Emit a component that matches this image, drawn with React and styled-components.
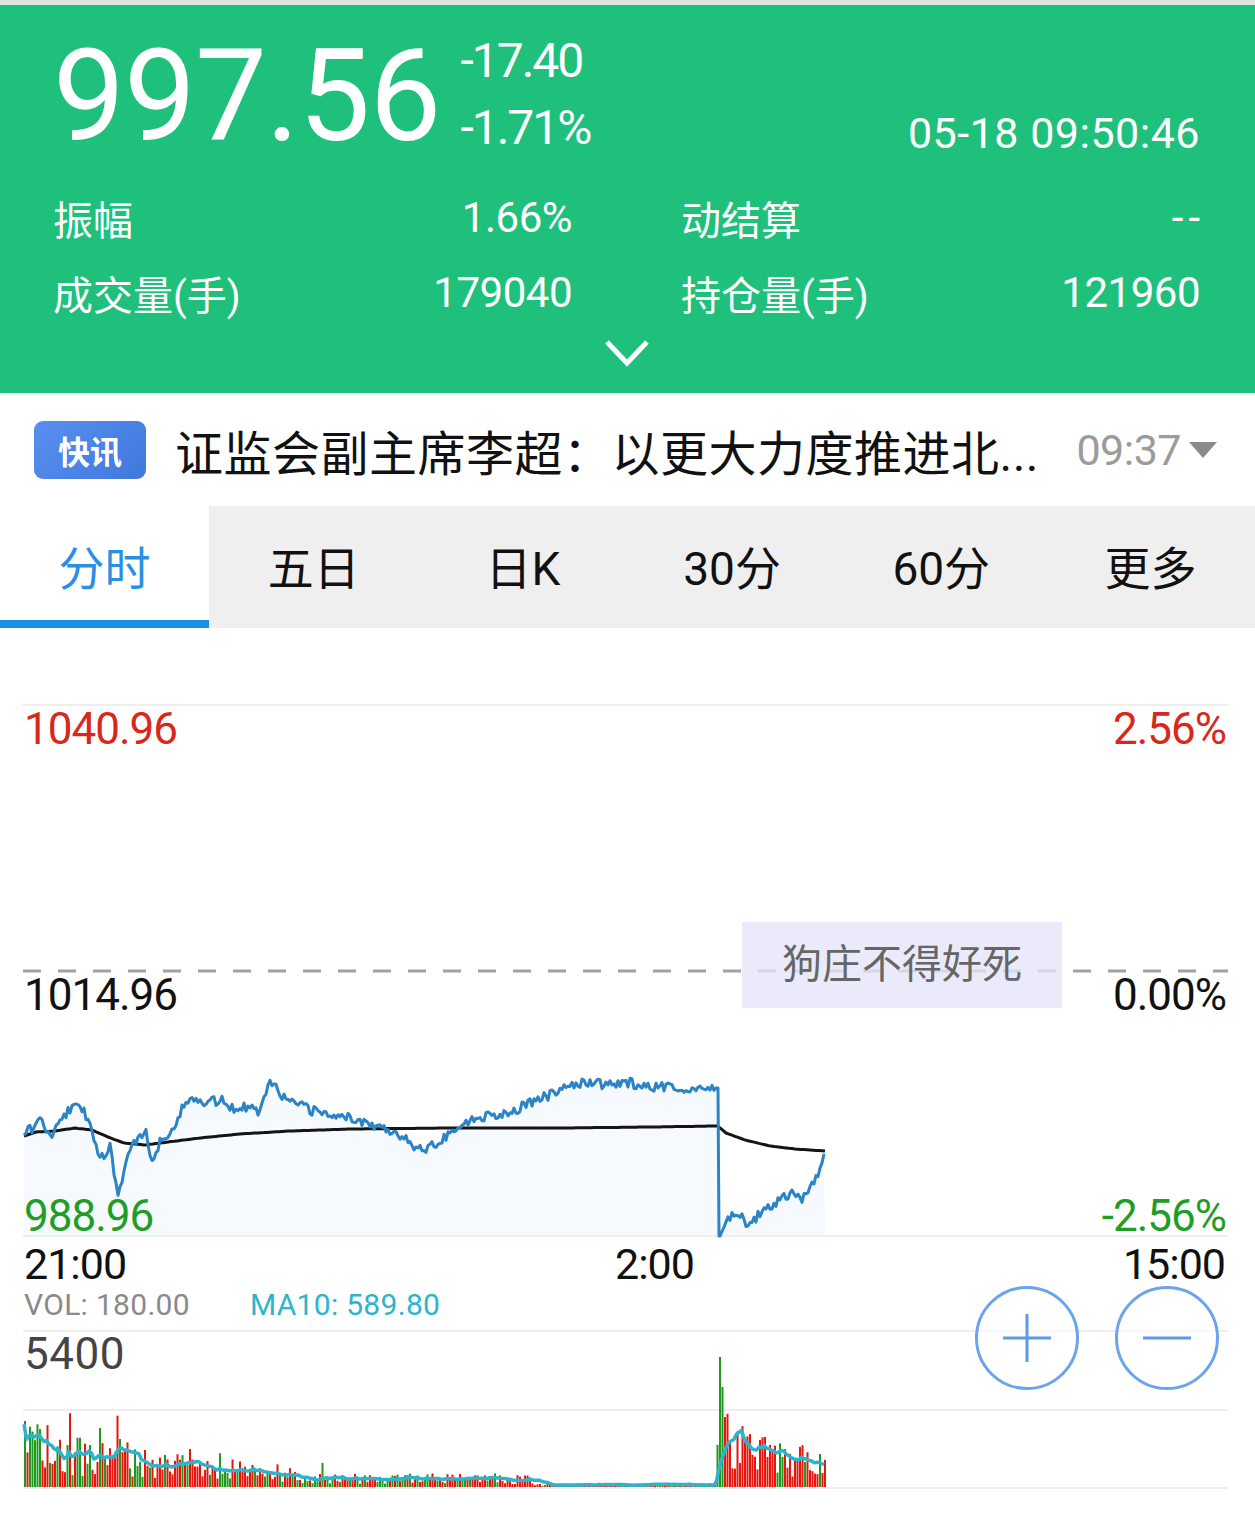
import React from "react";
import styled, { createGlobalStyle } from "styled-components";

const GREEN = "#1fc07c";
const RED = "#d9271c";
const DOWN = "#1f9e25";
const BLUE_LINE = "#2a84c6";

const GlobalStyle = createGlobalStyle`
  body {
    margin: 0;
    background: #fff;
    font-family: Roboto, "Noto Sans CJK SC", sans-serif;
  }
`;

const Page = styled.div`
  width: 1255px;
  height: 1518px;
  overflow: hidden;
  background: #fff;
`;

const TopStrip = styled.div`
  height: 5px;
  background: #dfe3e1;
`;

const Header = styled.header`
  height: 388px;
  box-sizing: border-box;
  padding: 0 55px 0 53px;
  background: ${GREEN};
  color: #fff;
  display: flex;
  flex-direction: column;
`;

const PriceRow = styled.div`
  display: flex;
  align-items: flex-start;
  margin-top: 22px;
  height: 136px;
`;

const Price = styled.div`
  margin-top: 5px;
  font-size: 128px;
  line-height: 128px;
  letter-spacing: -1px;
`;

const ChangeCol = styled.div`
  margin-left: 20px;
  font-size: 48px;
  line-height: 67px;
  letter-spacing: -2px;
`;

const DateTime = styled.div`
  margin-left: auto;
  margin-top: 85px;
  font-size: 43px;
  line-height: 43px;
  letter-spacing: 0.5px;
`;

const StatsGrid = styled.div`
  margin-top: 17px;
  display: grid;
  grid-template-columns: 1fr 1fr;
  column-gap: 109px;
`;

const StatCell = styled.div`
  display: flex;
  justify-content: space-between;
  align-items: center;
  height: 75px;
  font-size: 40px;
`;

const StatValue = styled.span`
  font-size: 42px;
  letter-spacing: ${(p) => (p.$spaced ? "5px" : "-0.5px")};
  margin-right: ${(p) => (p.$spaced ? "-5px" : "0")};
`;

const Chevron = styled.div`
  display: flex;
  justify-content: center;
  margin-top: 8px;
`;

const NewsBar = styled.div`
  height: 113px;
  display: flex;
  align-items: center;
  padding: 0 38px 0 34px;
  box-sizing: border-box;
`;

const Badge = styled.div`
  width: 112px;
  height: 58px;
  border-radius: 9px;
  background: linear-gradient(135deg, #5a8ff0, #3f78dc);
  color: #fff;
  font-size: 32px;
  font-weight: 700;
  display: flex;
  align-items: center;
  justify-content: center;
  flex-shrink: 0;
`;

const Headline = styled.div`
  margin-left: 29px;
  font-size: 48px;
  letter-spacing: 0.5px;
  color: #111;
  white-space: nowrap;
  flex: 1;
`;

const NewsTime = styled.div`
  font-size: 43px;
  color: #9b9b9b;
  letter-spacing: -0.5px;
  display: flex;
  align-items: center;
`;

const Caret = styled.span`
  margin-left: 8px;
  width: 0;
  height: 0;
  border-left: 14px solid transparent;
  border-right: 14px solid transparent;
  border-top: 16px solid #8a8a8a;
`;

const TabBar = styled.div`
  height: 122px;
  display: grid;
  grid-template-columns: repeat(6, 1fr);
  background: #efefef;
`;

const Tab = styled.div`
  display: flex;
  align-items: center;
  justify-content: center;
  box-sizing: border-box;
  font-size: 46px;
  color: ${(p) => (p.$active ? "#2a8fe2" : "#111")};
  background: ${(p) => (p.$active ? "#fff" : "transparent")};
  border-bottom: 8px solid ${(p) => (p.$active ? "#1a8ee6" : "transparent")};
  padding-top: 4px;
`;

const PriceChart = styled.div`
  position: relative;
  height: 612px;
`;

const ChartSvg = styled.svg`
  position: absolute;
  left: 0;
  top: 0;
  display: block;
`;

const AxisLabel = styled.div`
  position: absolute;
  top: ${(p) => p.$top}px;
  ${(p) => (p.$right ? "right: 29px;" : "left: 24px;")}
  font-size: 44px;
  line-height: 44px;
  letter-spacing: -1px;
  color: ${(p) => p.$color};
`;

const Remark = styled.div`
  position: absolute;
  left: 742px;
  top: 294px;
  width: 320px;
  height: 86px;
  background: rgba(228, 228, 250, 0.78);
  color: #666;
  font-size: 40px;
  display: flex;
  align-items: center;
  justify-content: center;
  padding-bottom: 8px;
  box-sizing: border-box;
`;

const TimeAxis = styled.div`
  display: grid;
  grid-template-columns: 591px 132px 1fr;
  padding: 3px 30px 0 24px;
  height: 45px;
  font-size: 43px;
  line-height: 43px;
  letter-spacing: -1px;
  color: #111;
`;

const TimeRight = styled.span`
  text-align: right;
`;

const VolumeChart = styled.div`
  position: relative;
  height: 230px;
`;

const VolLegend = styled.div`
  position: absolute;
  left: 24px;
  top: 4px;
  display: flex;
  gap: 60px;
  font-size: 30px;
  line-height: 26px;
  letter-spacing: 0.3px;
`;

const LegendItem = styled.span`
  color: ${(p) => p.$color};
`;

const VolMax = styled.div`
  position: absolute;
  left: 24px;
  top: 44px;
  font-size: 44px;
  line-height: 44px;
  color: #444;
  letter-spacing: 0.5px;
`;

const ZoomGroup = styled.div`
  position: absolute;
  left: 975px;
  top: -2px;
  display: flex;
  gap: 36px;
`;

const ZoomButton = styled.div`
  width: 104px;
  height: 104px;
  border-radius: 50%;
  border: 3px solid #6aa4ec;
  box-sizing: border-box;
  display: flex;
  align-items: center;
  justify-content: center;
  background: rgba(255, 255, 255, 0.6);
`;

function rng(seed) {
  return function () {
    seed |= 0;
    seed = (seed + 0x6d2b79f5) | 0;
    let t = Math.imul(seed ^ (seed >>> 15), 1 | seed);
    t = (t + Math.imul(t ^ (t >>> 7), 61 | t)) ^ t;
    return ((t ^ (t >>> 14)) >>> 0) / 4294967296;
  };
}

function interp(points, x) {
  for (let i = 0; i < points.length - 1; i++) {
    const [x0, y0] = points[i];
    const [x1, y1] = points[i + 1];
    if (x >= x0 && x <= x1) {
      const t = x1 === x0 ? 0 : (x - x0) / (x1 - x0);
      return y0 + (y1 - y0) * t;
    }
  }
  return points[points.length - 1][1];
}

const priceKeys = [
  [24, 1135], [32, 1128], [40, 1118], [50, 1138], [58, 1125], [68, 1110], [80, 1106],
  [90, 1122], [98, 1150], [104, 1162], [110, 1148], [118, 1196], [126, 1160],
  [136, 1140], [146, 1134], [152, 1160], [160, 1142], [172, 1128], [182, 1110],
  [192, 1095], [205, 1104], [220, 1100], [235, 1108], [248, 1106], [258, 1112],
  [270, 1078], [282, 1096], [295, 1104], [310, 1110], [330, 1114], [350, 1118],
  [372, 1124], [392, 1130], [405, 1138], [418, 1150], [432, 1146], [448, 1134],
  [462, 1124], [480, 1117], [500, 1114], [520, 1108], [536, 1100], [552, 1094],
  [570, 1086], [590, 1082], [610, 1085], [630, 1083], [650, 1088], [672, 1086],
  [690, 1090], [705, 1088], [718, 1088], [720, 1236], [728, 1218], [738, 1214],
  [748, 1224], [760, 1214], [772, 1204], [784, 1198], [794, 1194], [802, 1198],
  [812, 1186], [818, 1176], [825, 1150],
];

const avgKeys = [
  [24, 1136], [36, 1132], [55, 1131], [75, 1128], [92, 1130], [108, 1137],
  [124, 1143], [145, 1145], [168, 1142], [200, 1138], [240, 1134], [290, 1131],
  [350, 1129], [450, 1128], [560, 1128], [650, 1127], [718, 1126], [726, 1133],
  [745, 1140], [770, 1146], [795, 1149], [825, 1151],
];

function buildPrice() {
  const r = rng(7);
  const pts = [];
  for (let x = 24; x <= 825; x += 2) {
    let y = interp(priceKeys, x);
    const near = x >= 716 && x <= 722;
    if (!near && x > 26 && x < 823) y += (r() - 0.5) * 10;
    pts.push([x, y]);
    if (x === 718) pts.push([719, 1236]);
  }
  return pts;
}

function buildAvg() {
  const pts = [];
  for (let x = 24; x <= 825; x += 3) pts.push([x, interp(avgKeys, x)]);
  pts.push([825, 1151]);
  return pts;
}

function volEnvelope(x) {
  if (x < 50) return 48;
  if (x < 130) return 36;
  if (x < 300) return 28 - (x - 130) * 0.08;
  if (x < 530) return 10;
  if (x < 716) return 3;
  return 26 + 40 * Math.exp(-(x - 722) / 35);
}

function buildVolume() {
  const r = rng(21);
  const bars = [];
  for (let x = 24; x <= 825; x += 2.5) {
    let h = volEnvelope(x) * (0.3 + r() * 1.1);
    let up = r() < 0.38;
    if (x < 530 && r() < 0.05) h *= 2;
    bars.push({ x, h: Math.max(1, h), up });
  }
  const force = { 24: [66, true], 99: [59, true], 119: [48, true], 189: [38, false], 719: [130, true], 721.5: [100, true], 724: [70, false] };
  bars.forEach((b) => {
    const key = Object.keys(force).find((k) => Math.abs(Number(k) - b.x) < 1.25);
    if (key) {
      b.h = force[key][0];
      b.up = force[key][1];
    } else if (b.x > 724) {
      b.up = r() < 0.12;
    }
  });
  const ma = bars.map((b, i) => {
    const from = Math.max(0, i - 9);
    let s = 0;
    for (let j = from; j <= i; j++) s += bars[j].h;
    return [b.x, 1487 - (s / (i - from + 1)) * 0.95];
  });
  return { bars, ma };
}

const toPath = (pts) => pts.map(([x, y], i) => `${i ? "L" : "M"}${x} ${y.toFixed(1)}`).join(" ");

const pricePts = buildPrice();
const avgPts = buildAvg();
const { bars, ma } = buildVolume();

const tabs = ["分时", "五日", "日K", "30分", "60分", "更多"];

export default function App() {
  const fill = `${toPath(pricePts)} L825 1235 L24 1235 Z`;
  return (
    <Page>
      <GlobalStyle />
      <TopStrip />
      <Header>
        <PriceRow>
          <Price>997.56</Price>
          <ChangeCol>
            <div>-17.40</div>
            <div>-1.71%</div>
          </ChangeCol>
          <DateTime>05-18 09:50:46</DateTime>
        </PriceRow>
        <StatsGrid>
          <StatCell>
            <span>振幅</span>
            <StatValue>1.66%</StatValue>
          </StatCell>
          <StatCell>
            <span>动结算</span>
            <StatValue $spaced>--</StatValue>
          </StatCell>
          <StatCell>
            <span>成交量(手)</span>
            <StatValue>179040</StatValue>
          </StatCell>
          <StatCell>
            <span>持仓量(手)</span>
            <StatValue>121960</StatValue>
          </StatCell>
        </StatsGrid>
        <Chevron>
          <svg width="48" height="30" viewBox="0 0 48 30">
            <path d="M4 4 L24 25 L44 4" fill="none" stroke="#fff" strokeWidth="5" />
          </svg>
        </Chevron>
      </Header>

      <NewsBar>
        <Badge>快讯</Badge>
        <Headline>证监会副主席李超：以更大力度推进北...</Headline>
        <NewsTime>
          09:37
          <Caret />
        </NewsTime>
      </NewsBar>

      <TabBar>
        {tabs.map((t, i) => (
          <Tab key={t} $active={i === 0}>
            {t}
          </Tab>
        ))}
      </TabBar>

      <PriceChart>
        <ChartSvg width="1255" height="612" viewBox="0 628 1255 612">
          <line x1="23" y1="705" x2="1228" y2="705" stroke="#eeeeee" strokeWidth="2" />
          <line x1="23" y1="1236" x2="1228" y2="1236" stroke="#eeeeee" strokeWidth="2" />
          <path d={fill} fill="#f6f9fd" />
          <line
            x1="23"
            y1="971"
            x2="1228"
            y2="971"
            stroke="#a2a2a2"
            strokeWidth="3"
            strokeDasharray="18 17"
          />
          <path d={toPath(avgPts)} fill="none" stroke="#151515" strokeWidth="3" strokeLinejoin="round" />
          <path d={toPath(pricePts)} fill="none" stroke={BLUE_LINE} strokeWidth="3" strokeLinejoin="round" />
        </ChartSvg>
        <AxisLabel $top={79} $color={RED}>1040.96</AxisLabel>
        <AxisLabel $top={79} $color={RED} $right>2.56%</AxisLabel>
        <AxisLabel $top={345} $color="#111">1014.96</AxisLabel>
        <AxisLabel $top={345} $color="#111" $right>0.00%</AxisLabel>
        <AxisLabel $top={566} $color={DOWN}>988.96</AxisLabel>
        <AxisLabel $top={566} $color={DOWN} $right>-2.56%</AxisLabel>
        <Remark>狗庄不得好死</Remark>
      </PriceChart>

      <TimeAxis>
        <span>21:00</span>
        <span>2:00</span>
        <TimeRight>15:00</TimeRight>
      </TimeAxis>

      <VolumeChart>
        <ChartSvg width="1255" height="230" viewBox="0 1288 1255 230">
          <line x1="23" y1="1331" x2="1228" y2="1331" stroke="#eeeeee" strokeWidth="2" />
          <line x1="23" y1="1410" x2="1228" y2="1410" stroke="#eeeeee" strokeWidth="2" />
          <line x1="23" y1="1488" x2="1228" y2="1488" stroke="#eeeeee" strokeWidth="2" />
          {bars.map((b) => (
            <rect
              key={b.x}
              x={b.x}
              y={1487 - b.h}
              width="2"
              height={b.h}
              fill={b.up ? "#1f9a1f" : "#e8150c"}
            />
          ))}
          <path
            d={toPath(ma)}
            fill="none"
            stroke="#2cb4cc"
            strokeWidth="3.5"
            strokeLinejoin="round"
          />
        </ChartSvg>
        <VolLegend>
          <LegendItem $color="#8a8a8a">VOL: 180.00</LegendItem>
          <LegendItem $color="#2cb4cc">MA10: 589.80</LegendItem>
        </VolLegend>
        <VolMax>5400</VolMax>
        <ZoomGroup>
          <ZoomButton>
            <svg width="52" height="52" viewBox="0 0 52 52">
              <path d="M2 26 H50 M26 2 V50" stroke="#5b9be8" strokeWidth="3" />
            </svg>
          </ZoomButton>
          <ZoomButton>
            <svg width="52" height="52" viewBox="0 0 52 52">
              <path d="M2 26 H50" stroke="#5b9be8" strokeWidth="3" />
            </svg>
          </ZoomButton>
        </ZoomGroup>
      </VolumeChart>
    </Page>
  );
}
